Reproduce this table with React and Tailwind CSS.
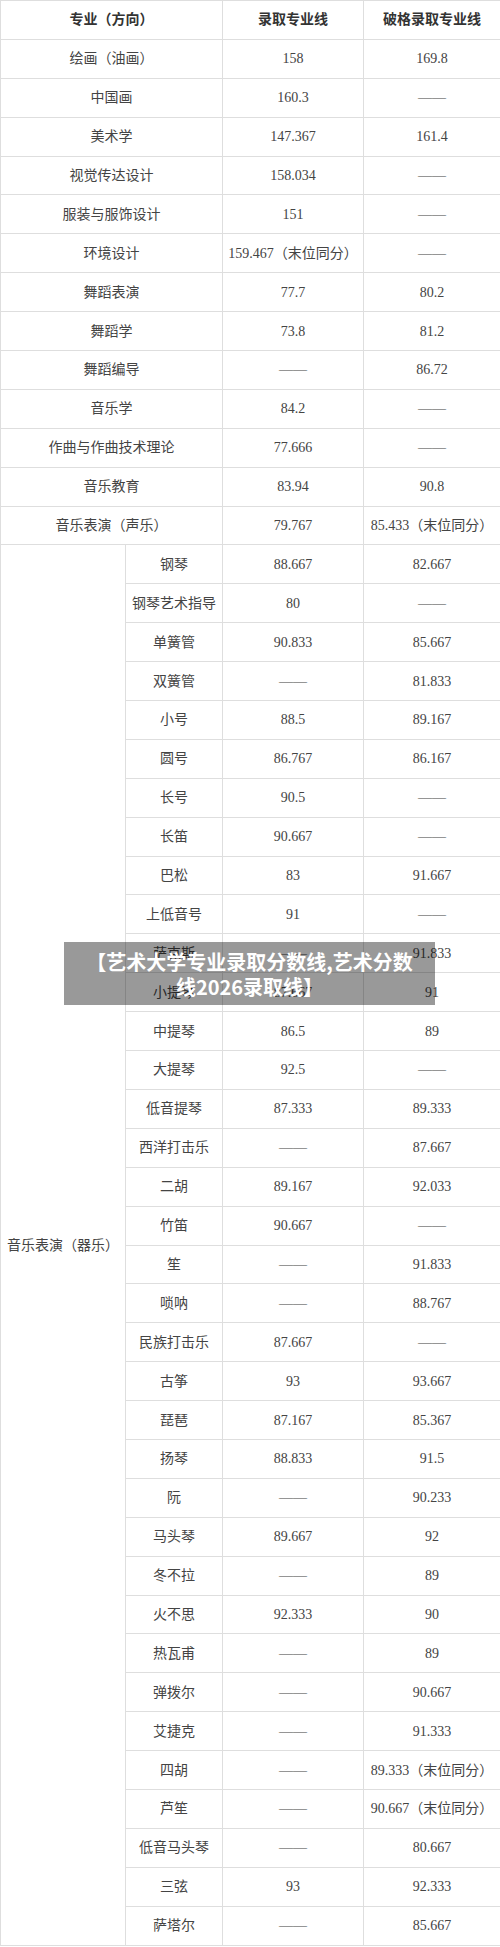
const mainRows = [
  ["绘画（油画）", "158", "169.8"],
  ["中国画", "160.3", "——"],
  ["美术学", "147.367", "161.4"],
  ["视觉传达设计", "158.034", "——"],
  ["服装与服饰设计", "151", "——"],
  ["环境设计", "159.467（末位同分）", "——"],
  ["舞蹈表演", "77.7", "80.2"],
  ["舞蹈学", "73.8", "81.2"],
  ["舞蹈编导", "——", "86.72"],
  ["音乐学", "84.2", "——"],
  ["作曲与作曲技术理论", "77.666", "——"],
  ["音乐教育", "83.94", "90.8"],
  ["音乐表演（声乐）", "79.767", "85.433（末位同分）"],
];

const instruments = [
  ["钢琴", "88.667", "82.667"],
  ["钢琴艺术指导", "80", "——"],
  ["单簧管", "90.833", "85.667"],
  ["双簧管", "——", "81.833"],
  ["小号", "88.5", "89.167"],
  ["圆号", "86.767", "86.167"],
  ["长号", "90.5", "——"],
  ["长笛", "90.667", "——"],
  ["巴松", "83", "91.667"],
  ["上低音号", "91", "——"],
  ["萨克斯", "——", "91.833"],
  ["小提琴", "87.667", "91"],
  ["中提琴", "86.5", "89"],
  ["大提琴", "92.5", "——"],
  ["低音提琴", "87.333", "89.333"],
  ["西洋打击乐", "——", "87.667"],
  ["二胡", "89.167", "92.033"],
  ["竹笛", "90.667", "——"],
  ["笙", "——", "91.833"],
  ["唢呐", "——", "88.767"],
  ["民族打击乐", "87.667", "——"],
  ["古筝", "93", "93.667"],
  ["琵琶", "87.167", "85.367"],
  ["扬琴", "88.833", "91.5"],
  ["阮", "——", "90.233"],
  ["马头琴", "89.667", "92"],
  ["冬不拉", "——", "89"],
  ["火不思", "92.333", "90"],
  ["热瓦甫", "——", "89"],
  ["弹拨尔", "——", "90.667"],
  ["艾捷克", "——", "91.333"],
  ["四胡", "——", "89.333（末位同分）"],
  ["芦笙", "——", "90.667（末位同分）"],
  ["低音马头琴", "——", "80.667"],
  ["三弦", "93", "92.333"],
  ["萨塔尔", "——", "85.667"],
];

const cell = "border border-[#dedede] text-center align-middle px-1 whitespace-nowrap";

export default function App() {
  return (
    <div className="relative w-[500px] bg-white font-['Liberation_Serif','Noto_Sans_CJK_SC',serif] text-[14px] text-[#444]">
      <table className="w-[500px] table-fixed border-collapse">
        <colgroup>
          <col className="w-[125px]" />
          <col className="w-[97px]" />
          <col className="w-[141px]" />
          <col className="w-[137px]" />
        </colgroup>
        <tbody>
          <tr className="h-[38.9px] font-bold text-[#333]">
            <td colSpan={2} className={cell}>专业（方向）</td>
            <td className={cell}>录取专业线</td>
            <td className={cell}>破格录取专业线</td>
          </tr>
          {mainRows.map(([name, a, b]) => (
            <tr key={name} className="h-[38.9px]">
              <td colSpan={2} className={cell}>{name}</td>
              <td className={cell}>{a}</td>
              <td className={cell}>{b}</td>
            </tr>
          ))}
          {instruments.map(([name, a, b], i) => (
            <tr key={name} className="h-[38.9px]">
              {i === 0 && (
                <td rowSpan={instruments.length} className={cell}>音乐表演（器乐）</td>
              )}
              <td className={cell}>{name}</td>
              <td className={cell}>{a}</td>
              <td className={cell}>{b}</td>
            </tr>
          ))}
        </tbody>
      </table>

      <div className="absolute left-[64px] top-[942px] w-[371px] h-[63px] bg-black/40 flex flex-col items-center justify-center font-['Noto_Sans_CJK_SC',sans-serif] font-bold text-[20px] leading-[25px] text-white">
        <span>【艺术大学专业录取分数线,艺术分数</span>
        <span>线2026录取线】</span>
      </div>
    </div>
  );
}
